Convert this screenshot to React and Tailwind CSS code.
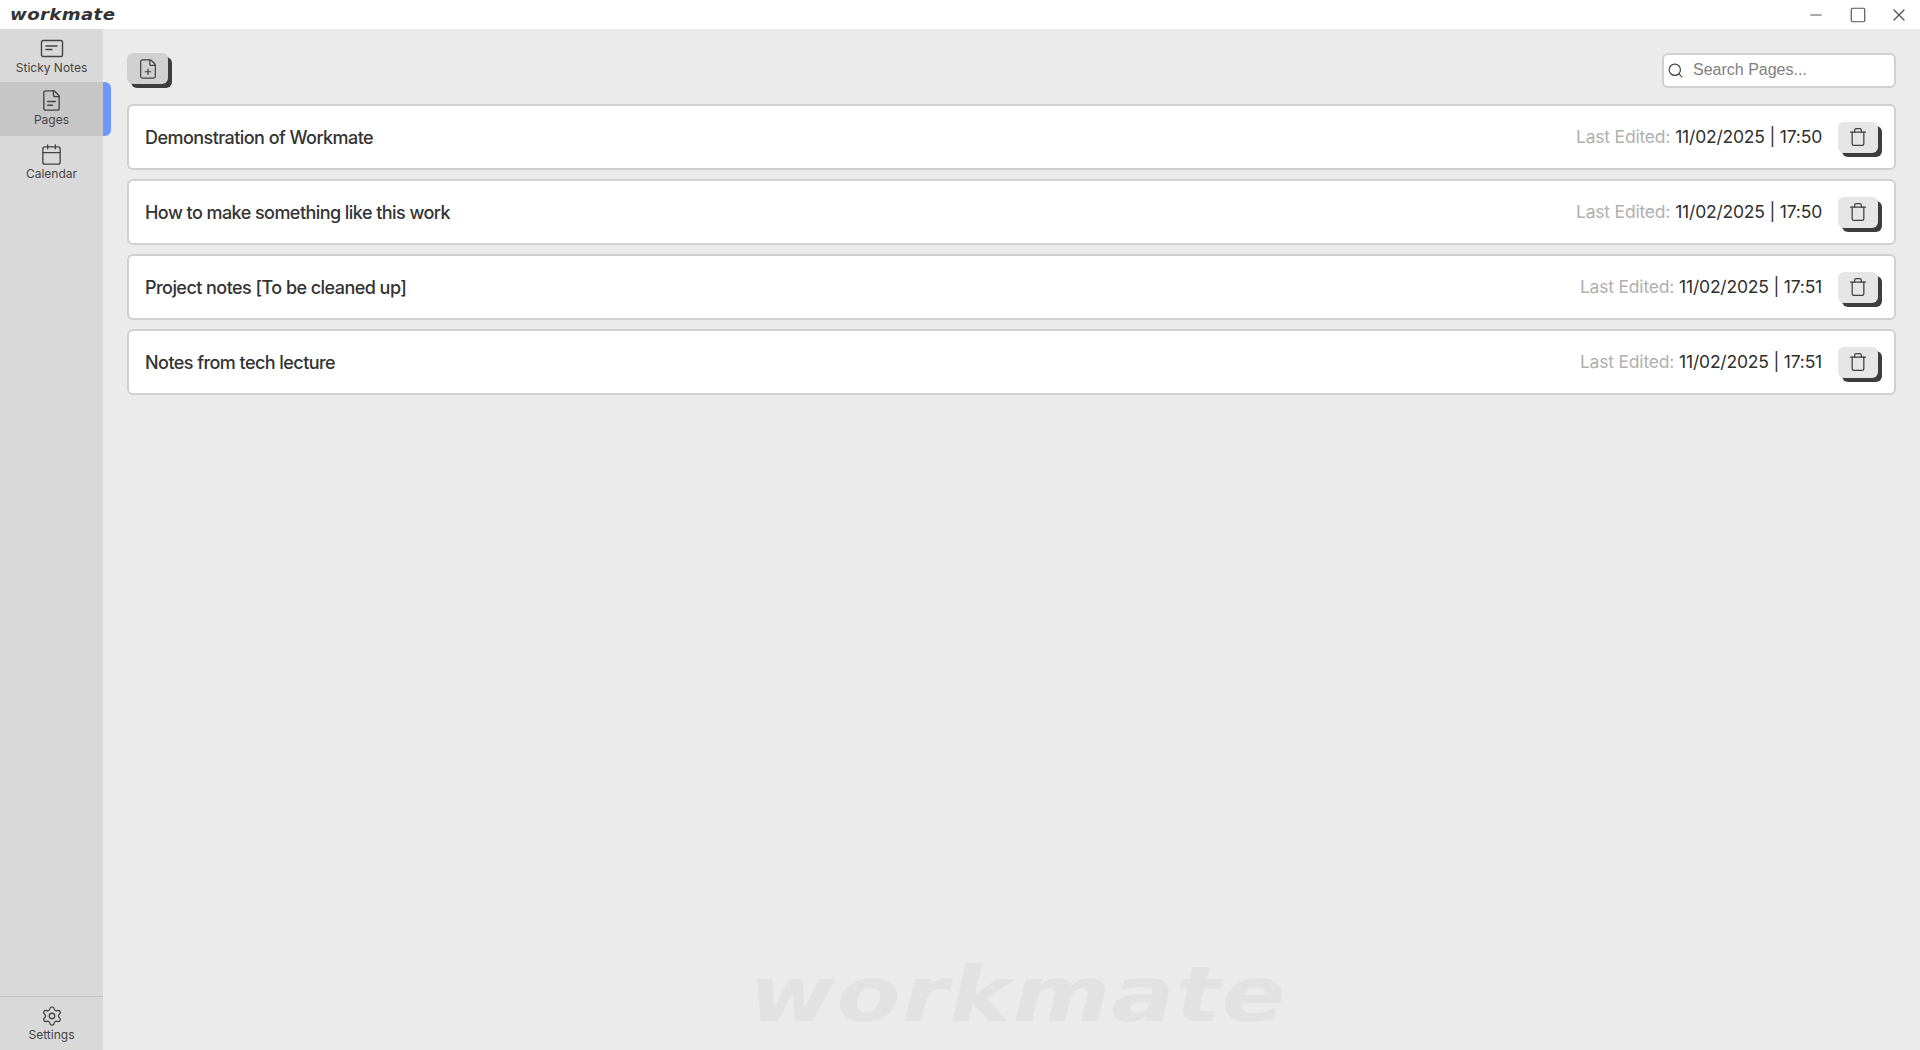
import React from 'react';
import { Calendar, FilePlus, Minus, Search, Settings, Square, Trash, X } from 'lucide-react';

const pages = [
  { title: 'Demonstration of Workmate', edited: '11/02/2025 | 17:50' },
  { title: 'How to make something like this work', edited: '11/02/2025 | 17:50' },
  { title: 'Project notes [To be cleaned up]', edited: '11/02/2025 | 17:51' },
  { title: 'Notes from tech lecture', edited: '11/02/2025 | 17:51' },
];

const uiFont = "font-['Inter',sans-serif]";

function StickyIcon() {
  return (
    <svg width="24" height="20" viewBox="0 0 24 20" fill="none" stroke="#444" strokeWidth="1.4" strokeLinecap="round">
      <rect x="1.5" y="1.5" width="21" height="16" rx="1.5" />
      <path d="M6 7h11M6 10.5h6" />
    </svg>
  );
}

// two text lines, the package's file-text has three
function PageIcon() {
  return (
    <svg width="23" height="23" viewBox="0 0 24 24" fill="none" stroke="#444" strokeWidth="1.4" strokeLinecap="round" strokeLinejoin="round">
      <path d="M15 2H6a2 2 0 0 0-2 2v16a2 2 0 0 0 2 2h12a2 2 0 0 0 2-2V7Z" />
      <path d="M14 2v4a2 2 0 0 0 2 2h4" />
      <path d="M8 13h8M8 17h5" />
    </svg>
  );
}

function NavItem({ icon, label, active, first }) {
  return (
    <div className="relative">
      <div className={`flex w-[103px] flex-col items-center ${first ? 'h-[53px] pt-[8px]' : 'h-[54px] pt-[7px]'} ${active ? 'bg-[#c6c6c6]' : ''}`}>
        <div className="flex h-[23px] items-center">{icon}</div>
        <span className="text-[12px] leading-[15px] text-[#444]">{label}</span>
      </div>
      {active && <div className="absolute left-[103px] top-0 h-[54px] w-2 rounded-r-md bg-[#7097ff]" />}
    </div>
  );
}

function PageRow({ title, edited }) {
  return (
    <div className="flex h-[66px] items-center rounded-md border-2 border-[#d0d0d0] bg-white pl-[16px] pr-[16px]">
      <span className="flex-1 text-[18px] font-medium tracking-[-0.55px] text-[#333]">{title}</span>
      <span className="text-[17.5px] tracking-[-0.2px] text-[#b0b0b0]">Last Edited:</span>
      <span className="ml-[5px] text-[17.5px] tracking-[-0.2px] text-[#2f2f2f]">{edited}</span>
      <button className="ml-[16px] flex h-[31px] w-[40px] items-center justify-center rounded-md bg-[#e6e6e6] shadow-[4px_4px_0_#3d3d3d]">
        <Trash size={20} strokeWidth={1.5} color="#3f3f3f" />
      </button>
    </div>
  );
}

export default function App() {
  return (
    <div className={`flex h-[1050px] w-[1920px] flex-col overflow-hidden bg-[#ebebeb] ${uiFont}`}>
      <header className="flex h-[29px] items-center justify-between bg-white">
        <span className="ml-[10px] mt-[1px] origin-left scale-x-[1.21] font-['DejaVu_Sans',sans-serif] text-[15px] font-bold italic tracking-[0.3px] text-[#333]">workmate</span>
        <div className="mr-[11px] flex items-center text-[#555]">
          <Minus size={18} strokeWidth={1.6} />
          <Square size={18} strokeWidth={1.6} className="ml-[24px]" />
          <X size={20} strokeWidth={1.6} className="ml-[22px]" />
        </div>
      </header>

      <div className="flex min-h-0 flex-1">
        <aside className="flex w-[103px] flex-col bg-[#d9d9d9]">
          <NavItem icon={<StickyIcon />} label="Sticky Notes" first />
          <NavItem icon={<PageIcon />} label="Pages" active />
          <NavItem icon={<Calendar size={23} strokeWidth={1.4} color="#444" />} label="Calendar" />
          <div className="mt-auto flex h-[54px] flex-col items-center border-t border-[#c0c0c0] pt-[8px]">
            <Settings size={22} strokeWidth={1.4} color="#444" />
            <span className="text-[12px] leading-[15px] text-[#444]">Settings</span>
          </div>
        </aside>

        <main className="relative flex-1 pl-[24px] pr-[24px] pt-[24px]">
          <div className="flex items-start justify-between">
            <button className="flex h-[31px] w-[41px] items-center justify-center rounded-md bg-[#d0d0d0] shadow-[4px_4px_0_#3d3d3d]">
              <FilePlus size={22} strokeWidth={1.3} color="#3f3f3f" />
            </button>
            <div className="flex h-[35px] w-[234px] items-center rounded-md border-2 border-[#d0d0d0] bg-white pl-[3px]">
              <Search size={17} strokeWidth={1.7} color="#444" />
              <span className="ml-[9px] pb-[2px] font-['Liberation_Sans',sans-serif] text-[16px] leading-[24px] text-[#808080]">Search Pages...</span>
            </div>
          </div>

          <div className="mt-[16px] flex flex-col gap-[9px]">
            {pages.map((page) => (
              <PageRow key={page.title} title={page.title} edited={page.edited} />
            ))}
          </div>

          <div className="absolute bottom-[17px] left-[646px] origin-left scale-x-[1.23] font-['DejaVu_Sans',sans-serif] text-[76px] font-bold italic leading-none tracking-[1px] text-[#e2e2e2]">
            workmate
          </div>
        </main>
      </div>
    </div>
  );
}
